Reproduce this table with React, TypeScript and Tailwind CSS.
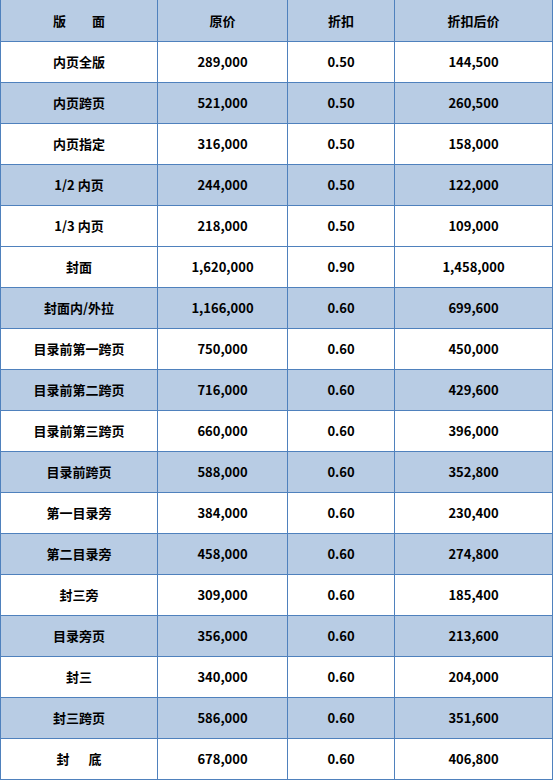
const rows: [string, string, string, string, boolean][] = [
  ["内页全版", "289,000", "0.50", "144,500", false],
  ["内页跨页", "521,000", "0.50", "260,500", true],
  ["内页指定", "316,000", "0.50", "158,000", false],
  ["1/2 内页", "244,000", "0.50", "122,000", true],
  ["1/3 内页", "218,000", "0.50", "109,000", false],
  ["封面", "1,620,000", "0.90", "1,458,000", false],
  ["封面内/外拉", "1,166,000", "0.60", "699,600", true],
  ["目录前第一跨页", "750,000", "0.60", "450,000", false],
  ["目录前第二跨页", "716,000", "0.60", "429,600", true],
  ["目录前第三跨页", "660,000", "0.60", "396,000", false],
  ["目录前跨页", "588,000", "0.60", "352,800", true],
  ["第一目录旁", "384,000", "0.60", "230,400", false],
  ["第二目录旁", "458,000", "0.60", "274,800", true],
  ["封三旁", "309,000", "0.60", "185,400", false],
  ["目录旁页", "356,000", "0.60", "213,600", true],
  ["封三", "340,000", "0.60", "204,000", false],
  ["封三跨页", "586,000", "0.60", "351,600", true],
  ["封\u3000  底", "678,000", "0.60", "406,800", false],
];

function Row({ cells, blue, header }: { cells: string[]; blue: boolean; header?: boolean }) {
  return (
    <div
      className={`flex border-b border-[#4f81bd] ${header ? "h-[42px]" : "h-[41px]"} ${
        blue ? "bg-[#b8cce4]" : "bg-white"
      }`}
    >
      <div className="w-[158px] shrink-0 border-l border-r border-[#4f81bd] flex items-center justify-center whitespace-pre">
        {cells[0]}
      </div>
      <div className="w-[130px] shrink-0 border-r border-[#4f81bd] flex items-center justify-center">
        {cells[1]}
      </div>
      <div className="w-[107px] shrink-0 border-r border-[#4f81bd] flex items-center justify-center">
        {cells[2]}
      </div>
      <div className="w-[158px] shrink-0 border-r border-[#4f81bd] flex items-center justify-center">
        {cells[3]}
      </div>
    </div>
  );
}

export default function App() {
  return (
    <div className="w-[554px] h-[780px] bg-white">
      <div className="w-[553px] text-[13px] font-bold text-black font-['Noto_Sans_CJK_SC',sans-serif]">
        <Row cells={["版\u3000\u3000面", "原价", "折扣", "折扣后价"]} blue header />
        {rows.map((r, i) => (
          <Row key={i} cells={[r[0], r[1], r[2], r[3]]} blue={r[4]} />
        ))}
      </div>
    </div>
  );
}
